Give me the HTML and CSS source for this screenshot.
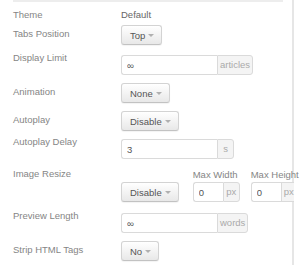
FILE: index.html
```html
<!DOCTYPE html>
<html>
<head>
    <title>Tabs Module Options</title>
    <link rel="stylesheet" href="styles.css">
</head>
<body>
    <div class="panel">
        <div class="rule"></div>
        <div class="form">
            <div class="row row-text">
                <div class="label">Theme</div>
                <div class="value">Default</div>
            </div>
            <div class="row row-first">
                <div class="label">Tabs Position</div>
                <button class="btn">Top <span class="caret"></span></button>
            </div>
            <div class="row row-input">
                <div class="label">Display Limit</div>
                <div class="append">
                    <input type="text" class="field field-wide" value="∞">
                    <span class="addon">articles</span>
                </div>
            </div>
            <div class="row">
                <div class="label">Animation</div>
                <button class="btn">None <span class="caret"></span></button>
            </div>
            <div class="row">
                <div class="label">Autoplay</div>
                <button class="btn">Disable <span class="caret"></span></button>
            </div>
            <div class="row row-input">
                <div class="label">Autoplay Delay</div>
                <div class="append">
                    <input type="text" class="field field-wide" value="3">
                    <span class="addon">s</span>
                </div>
            </div>
            <div class="row row-resize">
                <div class="label">Image Resize</div>
                <div class="resize">
                    <button class="btn btn-resize">Disable <span class="caret"></span></button>
                    <div class="size">
                        <div class="sublabel">Max Width</div>
                        <div class="append">
                            <input type="text" class="field field-small" value="0">
                            <span class="addon">px</span>
                        </div>
                    </div>
                    <div class="size size-last">
                        <div class="sublabel">Max Height</div>
                        <div class="append">
                            <input type="text" class="field field-small" value="0">
                            <span class="addon">px</span>
                        </div>
                    </div>
                </div>
            </div>
            <div class="row row-input">
                <div class="label">Preview Length</div>
                <div class="append">
                    <input type="text" class="field field-wide" value="∞">
                    <span class="addon">words</span>
                </div>
            </div>
            <div class="row">
                <div class="label">Strip HTML Tags</div>
                <button class="btn">No <span class="caret"></span></button>
            </div>
        </div>
    </div>
</body>
</html>
```

FILE: styles.css
```css
body {
    margin: 0;
    font-family: "Liberation Sans", Arial, sans-serif;
    font-size: 9.5px;
    color: #858585;
    background-color: #fff;
}
.panel {
    width: 292px;
    height: 265px;
    border-right: 2px solid #e6e6e6;
}
.rule {
    width: 270px;
    height: 2px;
    margin-left: 13px;
    background-color: #ededed;
}
.form {
    padding: 7px 0 0 13px;
}
.row {
    display: flex;
    align-items: flex-start;
    margin-bottom: 8px;
}
.row-text {
    margin-bottom: 4px;
}
.row-first {
    margin-bottom: 10px;
}
.row-resize {
    margin-top: 9px;
    margin-bottom: 11px;
}
.label {
    width: 108px;
    flex: none;
    line-height: 12px;
    padding-top: 3px;
}
.row-text .label, .row-resize .label {
    padding-top: 0;
}
.row-input .label {
    padding-top: 0;
    margin-top: -3px;
}
.value {
    line-height: 12px;
    color: #666;
}
.btn {
    display: inline-flex;
    align-items: center;
    flex: none;
    gap: 3px;
    height: 20px;
    box-sizing: border-box;
    padding: 0 7px 0 8px;
    font-family: inherit;
    font-size: 9.5px;
    color: #555;
    background: linear-gradient(#ffffff, #e8e8e8);
    border: 1px solid #d3d3d3;
    border-bottom-color: #c2c2c2;
    border-radius: 3px;
    box-shadow: 0 1px 1px rgba(0,0,0,0.05);
}
.caret {
    width: 0;
    height: 0;
    border-top: 3px solid #b0b0b0;
    border-left: 3px solid transparent;
    border-right: 3px solid transparent;
}
.append {
    display: flex;
    flex: none;
    height: 20px;
}
.field {
    height: 20px;
    box-sizing: border-box;
    margin: 0;
    padding: 0 5px;
    font-family: inherit;
    font-size: 9.5px;
    color: #555;
    border: 1px solid #dadada;
    border-right: none;
    border-radius: 3px 0 0 3px;
    outline: none;
}
.field-wide {
    width: 96px;
}
.field-small {
    width: 30px;
}
.addon {
    min-width: 17px;
    box-sizing: border-box;
    padding: 0 2px;
    line-height: 18px;
    text-align: center;
    color: #aaa;
    background-color: #f4f4f4;
    border: 1px solid #dadada;
    border-radius: 0 3px 3px 0;
}
.resize {
    display: flex;
    flex: none;
    align-items: flex-end;
}
.btn-resize {
    margin-right: 14px;
}
.size {
    flex: none;
    margin-right: 11px;
}
.size-last .addon {
    min-width: 13px;
    width: 13px;
    border-right: none;
    border-radius: 0;
}
.sublabel {
    line-height: 12px;
    margin: 1px 0 1px;
    white-space: nowrap;
}
```
